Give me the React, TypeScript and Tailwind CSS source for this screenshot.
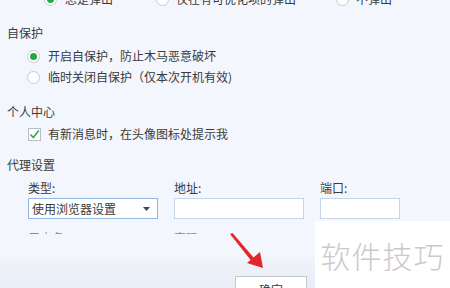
import React from 'react';

function Radio({ checked }: { checked?: boolean }) {
  return (
    <span className="w-[13px] h-[13px] rounded-full border border-[#c9ccd2] bg-white flex items-center justify-center shrink-0">
      {checked && <span className="w-[7px] h-[7px] rounded-full bg-[#1faa48]" />}
    </span>
  );
}

function Check() {
  return (
    <span className="w-[13px] h-[13px] border border-[#b9bcc2] bg-white flex items-center justify-center shrink-0">
      <svg width="11" height="11" viewBox="0 0 11 11">
        <path d="M1.5 5.5 L4.3 8.5 L9.8 1.5" fill="none" stroke="#2fa84f" strokeWidth="1.6" />
      </svg>
    </span>
  );
}

export default function App() {
  return (
    <div
      className="relative w-[450px] h-[288px] overflow-hidden bg-[#f3f6fc] text-[12px] text-[#3a3a3a] flex flex-col"
      style={{ fontFamily: '"Noto Sans CJK SC", "Noto Sans", sans-serif' }}
    >
      {/* 弹出 options, mostly scrolled off */}
      <div className="h-[20px] mt-[-11px] flex items-center">
        <div className="ml-[44px] w-[112px] flex items-center gap-[8px]">
          <Radio checked />
          <span>总是弹出</span>
        </div>
        <div className="w-[180px] flex items-center gap-[7px]">
          <Radio />
          <span>仅在有可优化项的弹出</span>
        </div>
        <div className="flex items-center gap-[7px]">
          <Radio />
          <span>不弹出</span>
        </div>
      </div>

      {/* 自保护 */}
      <div className="h-[20px] mt-[14px] pl-[7px] flex items-center">自保护</div>
      <div className="h-[20px] mt-[3px] pl-[27px] flex items-center gap-[8px]">
        <Radio checked />
        <span>开启自保护，防止木马恶意破坏</span>
      </div>
      <div className="h-[20px] mt-[1px] pl-[27px] flex items-center gap-[8px]">
        <Radio />
        <span>临时关闭自保护（仅本次开机有效)</span>
      </div>

      {/* 个人中心 */}
      <div className="h-[20px] mt-[15px] pl-[7px] flex items-center">个人中心</div>
      <div className="h-[20px] mt-[2px] pl-[28px] flex items-center gap-[7px]">
        <Check />
        <span>有新消息时，在头像图标处提示我</span>
      </div>

      {/* 代理设置 */}
      <div className="h-[20px] mt-[11px] pl-[7px] flex items-center">代理设置</div>
      <div className="h-[20px] mt-[3px] pl-[28px] flex items-center">
        <span className="w-[146px]">类型:</span>
        <span className="w-[146px]">地址:</span>
        <span>端口:</span>
      </div>
      <div className="h-[21px] pl-[28px] flex items-center">
        <div className="w-[130px] h-[21px] border border-[#8fb8e4] bg-white flex items-center justify-between pl-[3px] pr-[7px]">
          <span>使用浏览器设置</span>
          <svg width="7" height="4" viewBox="0 0 7 4">
            <path d="M0 0 H7 L3.5 4 Z" fill="#3d4a58" />
          </svg>
        </div>
        <div className="ml-[16px] w-[130px] h-[21px] border border-[#c3d6ea] bg-white" />
        <div className="ml-[16px] w-[80px] h-[21px] border border-[#c3d6ea] bg-white" />
      </div>
      <div className="h-[6px] mt-[9px] pl-[28px] flex overflow-hidden text-[#8a8a8a]">
        <span className="w-[146px] leading-[20px]">用户名:</span>
        <span className="leading-[20px]">密码:</span>
      </div>

      {/* footer */}
      <div className="mt-auto h-[30px] bg-gradient-to-b from-[#f0f3fa] to-[#e9edf5] pl-[235px] pt-[18px]">
        <div className="w-[72px] h-[24px] bg-white border border-[#c6c9cf] flex justify-center pt-[4px] text-[12px]">
          确定
        </div>
      </div>

      {/* watermark */}
      <div className="absolute left-[315px] top-[221px] w-[135px] h-[67px] bg-white flex items-start justify-center pt-[14px]">
        <span className="text-[30px] leading-[40px] font-light text-[#cacaca] tracking-[1px]">软件技巧</span>
      </div>

      {/* red arrow */}
      <svg className="absolute left-[226px] top-[230px]" width="44" height="44" viewBox="0 0 44 44">
        <path d="M4 4 L6.5 3 L28 28 L25 30.5 Z" fill="#e3262a" />
        <path d="M21 33 L34 22 L37 38 Z" fill="#e3262a" />
      </svg>
    </div>
  );
}
